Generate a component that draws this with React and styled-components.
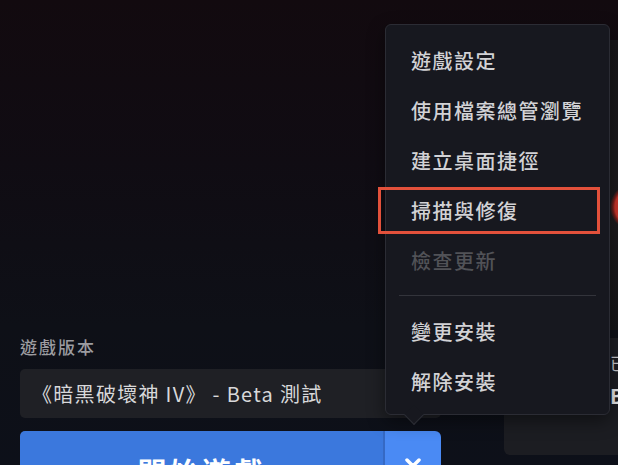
import React from "react";
import styled, { createGlobalStyle } from "styled-components";
import { ChevronDown } from "lucide-react";

const GlobalStyle = createGlobalStyle`
  html, body {
    margin: 0;
    padding: 0;
    background: #0e1017;
  }
  * {
    box-sizing: border-box;
  }
`;

const FONT = `"Noto Sans CJK TC", "Noto Sans", sans-serif`;

const Page = styled.div`
  position: relative;
  width: 618px;
  height: 465px;
  overflow: hidden;
  display: flex;
  gap: 63px;
  padding-left: 20px;
  font-family: ${FONT};
  background: linear-gradient(180deg, #120a0f 0%, #100c13 35%, #0e1017 70%, #0d1019 100%);
`;

const LeftColumn = styled.div`
  width: 421px;
  flex-shrink: 0;
  display: flex;
  flex-direction: column;
  padding-top: 336px;
  & > * {
    flex-shrink: 0;
  }
`;

const Label = styled.div`
  font-size: 17px;
  line-height: 22px;
  letter-spacing: 2px;
  color: #9c9ca0;
  font-weight: 500;
`;

const Select = styled.div`
  margin-top: 11px;
  width: 421px;
  height: 49px;
  border-radius: 5px;
  background: #1f2025;
  display: flex;
  align-items: center;
  padding-left: 12px;
  font-size: 20px;
  letter-spacing: 1.3px;
  color: #d8d8da;
  white-space: nowrap;
`;

const ButtonRow = styled.div`
  margin-top: 13px;
  display: flex;
  height: 80px;
`;

const PlayButton = styled.button`
  width: 363px;
  border: none;
  border-radius: 5px 0 0 5px;
  background: #3b78dd;
  color: #ffffff;
  font-family: ${FONT};
  font-size: 29px;
  font-weight: 700;
  letter-spacing: 3px;
  padding: 0;
`;

const SplitButton = styled.button`
  width: 58px;
  border: none;
  border-left: 2px solid #3569c4;
  border-radius: 0 6px 6px 0;
  background: #4a8af4;
  color: #ffffff;
  display: flex;
  align-items: flex-start;
  justify-content: center;
  padding: 20px 0 0;
`;

const RightColumn = styled.div`
  flex: 1;
  display: flex;
  flex-direction: column;
  padding-top: 40px;
`;

const ArtTile = styled.div`
  height: 290px;
  flex-shrink: 0;
  border-radius: 6px 0 0 6px;
  background: radial-gradient(circle at 130px 167px, #c8352a 0 19px, #7a1f1a 21px, transparent 24px),
    linear-gradient(180deg, #18171a 0%, #1d1b1d 60%, #161517 100%);
`;

const Card = styled.div`
  margin-top: 8px;
  height: 117px;
  flex-shrink: 0;
  border-radius: 6px 0 0 6px;
  background: #1c1d22;
  padding: 12px 0 0 16px;
  display: flex;
  flex-direction: column;
  gap: 6px;
  white-space: nowrap;
`;

const CardTitle = styled.div`
  font-size: 17px;
  color: #c9c9cc;
  letter-spacing: 1px;
`;

const CardBig = styled.div`
  font-size: 20px;
  font-weight: 700;
  color: #e8e8ea;
  padding-left: 90px;
`;

const Menu = styled.div`
  position: absolute;
  left: 385px;
  top: 24px;
  width: 225px;
  height: 391px;
  padding: 10px 0 9px;
  border: 1px solid #2b2c34;
  border-radius: 6px;
  background: #17181f;
  box-shadow: 0 6px 18px rgba(0, 0, 0, 0.45);
  display: flex;
  flex-direction: column;
`;

const MenuItem = styled.div`
  height: 50px;
  flex-shrink: 0;
  display: flex;
  align-items: center;
  padding-left: 25px;
  font-size: 20px;
  font-weight: 500;
  letter-spacing: 1.5px;
  color: ${({ disabled }) => (disabled ? "#515257" : "#d2d2d5")};
  white-space: nowrap;
`;

const Divider = styled.div`
  height: 1px;
  flex-shrink: 0;
  margin: 10px 13px;
  background: #33343b;
`;

const Arrow = styled.div`
  position: absolute;
  left: 21px;
  bottom: -8px;
  width: 14px;
  height: 14px;
  background: #17181f;
  border-right: 1px solid #2b2c34;
  border-bottom: 1px solid #2b2c34;
  transform: rotate(45deg);
`;

const Highlight = styled.div`
  position: absolute;
  left: 378px;
  top: 187px;
  width: 222px;
  height: 47px;
  border: 3px solid #e2513b;
  pointer-events: none;
`;

const menuItems = [
  { label: "遊戲設定" },
  { label: "使用檔案總管瀏覽" },
  { label: "建立桌面捷徑" },
  { label: "掃描與修復" },
  { label: "檢查更新", disabled: true },
];

const installItems = ["變更安裝", "解除安裝"];

export default function App() {
  return (
    <>
      <GlobalStyle />
      <Page>
        <LeftColumn>
          <Label>遊戲版本</Label>
          <Select>《暗黑破壞神 IV》 - Beta 測試</Select>
          <ButtonRow>
            <PlayButton>開始遊戲</PlayButton>
            <SplitButton>
              <ChevronDown size={24} strokeWidth={3.5} />
            </SplitButton>
          </ButtonRow>
        </LeftColumn>
        <RightColumn>
          <ArtTile />
          <Card>
            <CardTitle>搶先體驗現已開放！完整說明</CardTitle>
            <CardBig>Beta</CardBig>
          </Card>
        </RightColumn>

        <Menu>
          {menuItems.map((item) => (
            <MenuItem key={item.label} disabled={item.disabled}>
              {item.label}
            </MenuItem>
          ))}
          <Divider />
          {installItems.map((label) => (
            <MenuItem key={label}>{label}</MenuItem>
          ))}
          <Arrow />
        </Menu>
        <Highlight />
      </Page>
    </>
  );
}
